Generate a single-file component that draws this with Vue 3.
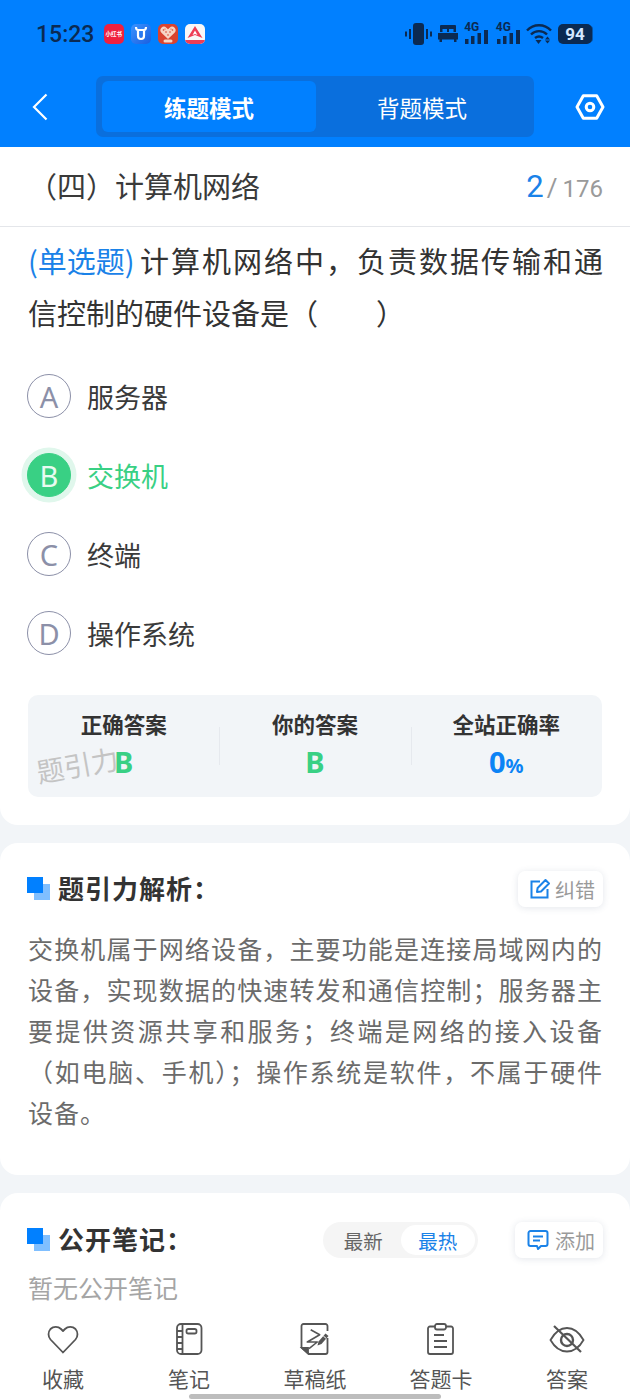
<script setup>
const options = [
  { key: 'A', text: '服务器' },
  { key: 'B', text: '交换机', picked: true },
  { key: 'C', text: '终端' },
  { key: 'D', text: '操作系统' },
]
</script>

<template>
  <div class="page">
    <header class="header">
      <div class="status">
        <span class="time">15:23</span>
        <div class="apps">
          <span class="app red">小红书</span>
          <span class="app blue">
            <svg width="16" height="16" viewBox="0 0 16 16"><path d="M3 1c0 2 1 3 2 3h6c1 0 2-1 2-3M5 4v6a3 3 0 0 0 6 0V4" fill="none" stroke="#fff" stroke-width="2.200"/></svg>
          </span>
          <span class="app heart">
            <svg width="20" height="20" viewBox="0 0 20 20"><path d="M10 15 3.400 8.800a3.400 3.400 0 0 1 0-5 3.500 3.500 0 0 1 5 0L10 5.200l1.600-1.400a3.500 3.500 0 0 1 5 0 3.400 3.400 0 0 1 0 5z" fill="#f6d4c4"/><g fill="#d9432f"><circle cx="5.500" cy="6" r=".8"/><circle cx="8" cy="8" r=".8"/><circle cx="12" cy="8" r=".8"/><circle cx="14.500" cy="6" r=".8"/><circle cx="10" cy="11" r=".8"/><circle cx="7" cy="5" r=".6"/><circle cx="13" cy="5" r=".6"/></g><rect x="5.500" y="15.500" width="9" height="3" rx="1.500" fill="#f6d4c4"/></svg>
          </span>
          <span class="app white">
            <svg width="20" height="20" viewBox="0 0 20 20"><path d="M10 2 17.500 14 10 11 2.500 14z" fill="#ee3d55"/><path d="M10 6.500 7.500 11 10 10l2.500 1z" fill="#fff"/><rect x="0" y="16" width="20" height="4" fill="#ee3d55"/></svg>
          </span>
        </div>
        <div class="spacer"></div>
        <div class="sys">
          <svg width="27" height="22" viewBox="0 0 27 22" fill="#0b2a52"><rect x="8" y="0" width="11" height="22" rx="3"/><rect x="4" y="6" width="2" height="10"/><rect x="0" y="8.500" width="2" height="5"/><rect x="21" y="6" width="2" height="10"/><rect x="25" y="8.500" width="2" height="5"/></svg>
          <svg width="20" height="18" viewBox="0 0 20 18" fill="#0b2a52"><path d="M3 0h14a1 1 0 0 1 1 1v6h-2.500V4H11v3H9V4H4.500v3H2V1a1 1 0 0 1 1-1z"/><path d="M0 8h20v6.500h-1.500V17H16v-2.500H4V17H1.500v-2.500H0z"/></svg>
          <span class="signal">
            <span class="g">4G</span>
            <svg width="26" height="22" viewBox="0 0 26 22" fill="#0b2a52"><rect x="2" y="16" width="3.500" height="5"/><rect x="8" y="13" width="3.500" height="8"/><rect x="14.500" y="10" width="3.500" height="11"/><rect x="21" y="7" width="4" height="14"/></svg>
          </span>
          <span class="signal">
            <span class="g">4G</span>
            <svg width="26" height="22" viewBox="0 0 26 22" fill="#0b2a52"><rect x="2" y="16" width="3.500" height="5"/><rect x="8" y="13" width="3.500" height="8"/><rect x="14.500" y="10" width="3.500" height="11"/><rect x="21" y="7" width="4" height="14"/></svg>
          </span>
          <svg width="26" height="22" viewBox="0 0 26 22" fill="none" stroke="#0b2a52" stroke-width="2.400"><path d="M1 7.500C7.500 .5 18.500 .5 25 7.500"/><path d="M5 11.500c4.500-4.500 11.500-4.500 16 0"/><path d="M9 15c2.500-2 5.500-2 8 0"/><path d="M9.500 17h6L12.500 21z" fill="#0b2a52" stroke="none"/><path d="M19 16.500h5L21.500 13.500zM19 17.500h5L21.500 20.500z" fill="#0b2a52" stroke="none"/></svg>
          <span class="battery"><b>94</b></span>
        </div>
      </div>
      <nav class="nav">
        <svg class="back" width="16" height="28" viewBox="0 0 16 28" fill="none" stroke="#fff" stroke-width="2.200"><path d="M14.500 1.500 2 14l12.500 12.500"/></svg>
        <div class="seg">
          <span class="seg-item on">练题模式</span>
          <span class="seg-item">背题模式</span>
        </div>
        <svg class="gear" width="30" height="26" viewBox="0 0 30 26" fill="none" stroke="#fff" stroke-width="3"><path d="M8.300 1.700h13.400L28 13l-6.300 11.300H8.300L2 13z" stroke-linejoin="round"/><circle cx="15" cy="13" r="3.800"/></svg>
      </nav>
    </header>

    <main class="scroll">
      <section class="card first">
        <div class="title-row">
          <span class="title">（四）计算机网络</span>
          <span class="count"><em>2</em><i>/</i>176</span>
        </div>
        <div class="question">
          <div class="qline"><span class="qtype">(单选题)</span><span class="qtext">计算机网络中，负责数据传输和通</span></div>
          <div>信控制的硬件设备是（&emsp;&emsp;）</div>
        </div>
        <ul class="options">
          <li v-for="o in options" :key="o.key" class="option" :class="{ picked: o.picked }">
            <span class="badge">{{ o.key }}</span>
            <span>{{ o.text }}</span>
          </li>
        </ul>
        <div class="stats">
          <div class="stat">
            <b>正确答案</b>
            <span class="val green">B</span>
            <span class="mark">题引力</span>
          </div>
          <div class="stat">
            <b>你的答案</b>
            <span class="val green">B</span>
          </div>
          <div class="stat">
            <b>全站正确率</b>
            <span class="val blue">0<small>%</small></span>
          </div>
        </div>
      </section>

      <section class="card analysis">
        <div class="head">
          <span class="squares"><s></s><i></i></span>
          <h2>题引力解析：</h2>
          <div class="spacer"></div>
          <span class="chip fix">
            <svg width="22" height="22" viewBox="0 0 22 22" fill="none" stroke="#1a82e8" stroke-width="2"><path d="M11 3.500H2.500v16h16V11"/><path d="M8 14l.6-4L16.500 2l3.500 3.500-8 8z" stroke-linejoin="round"/></svg>
            纠错
          </span>
        </div>
        <p class="body">交换机属于网络设备，主要功能是连接局域网内的设备，实现数据的快速转发和通信控制；服务器主要提供资源共享和服务；终端是网络的接入设备（如电脑、手机）；操作系统是软件，不属于硬件设备。</p>
      </section>

      <section class="card notes">
        <div class="head">
          <span class="squares"><s></s><i></i></span>
          <h2>公开笔记：</h2>
          <div class="spacer"></div>
          <div class="toggle">
            <span>最新</span>
            <span class="on">最热</span>
          </div>
          <span class="chip add">
            <svg width="22" height="22" viewBox="0 0 22 22" fill="none" stroke="#1a82e8" stroke-width="2"><path d="M3.500 2h15A2 2 0 0 1 20.500 4v11a2 2 0 0 1-2 2H14l-3 3-1-3H3.500a2 2 0 0 1-2-2V4a2 2 0 0 1 2-2z" stroke-linejoin="round"/><path d="M6 7.500h10M6 11.500h7"/></svg>
            添加
          </span>
        </div>
        <p class="empty">暂无公开笔记</p>
      </section>
    </main>

    <footer class="tabs">
      <div class="tab">
        <svg width="32" height="32" viewBox="0 0 32 32" fill="none" stroke="#555" stroke-width="1.800"><path d="M16 29.500 3.500 16.500a8 8 0 0 1 0-10.500 7.500 7.500 0 0 1 10.500 0L16 8l2-2a7.500 7.500 0 0 1 10.500 0 8 8 0 0 1 0 10.500z" stroke-linejoin="round"/></svg>
        <span>收藏</span>
      </div>
      <div class="tab">
        <svg width="32" height="32" viewBox="0 0 32 32" fill="none" stroke="#555" stroke-width="1.800"><rect x="4" y="1" width="24.500" height="30" rx="4"/><path d="M9.500 1v30M4 8h5.500M4 14h5.500M4 20h5.500M4 26h5.500"/><rect x="13.500" y="6" width="10" height="4.500" rx="1.800"/></svg>
        <span>笔记</span>
      </div>
      <div class="tab">
        <svg width="32" height="32" viewBox="0 0 32 32" fill="none" stroke="#555" stroke-width="1.800"><path d="M28.500 8V3a2 2 0 0 0-2-2H4.500a2 2 0 0 0-2 2v21.500L10 31h16.500a2 2 0 0 0 2-2V15" stroke-linejoin="round"/><path d="M3 25h6v5.500z" fill="#555"/><path d="M11.700 6.700 20.700 11.700 8.300 19 18.300 19 10 25.700" stroke-linejoin="round" stroke-width="1.600"/><path d="M18.500 22.500 19.500 18.500 26.500 10.500 29.500 13 22.500 21z" fill="#555" stroke="none"/><path d="M24.300 13 27 15.300" stroke="#fff" stroke-width="1"/></svg>
        <span>草稿纸</span>
      </div>
      <div class="tab">
        <svg width="32" height="32" viewBox="0 0 32 32" fill="none" stroke="#555" stroke-width="1.800"><path d="M10 3.500H5a2 2 0 0 0-2 2V29a2 2 0 0 0 2 2h21a2 2 0 0 0 2-2V5.500a2 2 0 0 0-2-2h-5"/><rect x="10" y="1" width="11" height="5.500" rx="2"/><path d="M9 12h10M9 18h13M9 24h13"/></svg>
        <span>答题卡</span>
      </div>
      <div class="tab">
        <svg width="36" height="32" viewBox="0 0 36 32" fill="none" stroke="#555" stroke-width="1.800"><path d="M1.500 17C6 9 11.500 5 18 5s12 4 16.500 12C30 25 24.500 28.500 18 28.500S6 25 1.500 17z"/><circle cx="18" cy="17" r="6" stroke-width="2.400"/><path d="M5 3l27 26" stroke-width="2.200"/></svg>
        <span>答案</span>
      </div>
      <div class="home-bar"></div>
    </footer>
  </div>
</template>

<style scoped>
.page {
  width: 630px;
  height: 1400px;
  display: flex;
  flex-direction: column;
  overflow: hidden;
  background: #f2f5f8;
  position: relative;
  font-family: "Noto Sans CJK SC", "Noto Sans", sans-serif;
  color: #3a3a3a;
}
.header {
  background: #0180ff;
  height: 147px;
  flex: none;
}
.status {
  height: 76px;
  box-sizing: border-box;
  display: flex;
  align-items: center;
  padding: 0 38px 8px 36px;
}
.time {
  font-family: Roboto, sans-serif;
  font-size: 23px;
  font-weight: 500;
  color: #0b2a52;
  line-height: 1;
}
.apps {
  display: flex;
  gap: 7px;
  margin-left: 9.500px;
}
.app {
  width: 20px;
  height: 20px;
  border-radius: 5px;
  display: flex;
  align-items: center;
  justify-content: center;
  overflow: hidden;
  font-size: 5.500px;
  font-weight: 700;
  color: #fff;
  white-space: nowrap;
}
.red { background: #f0203f; }
.blue { background: linear-gradient(135deg, #3b93ff, #1a5fe0); }
.heart { background: #d9432f; }
.white { background: #f8f8f8; }
.spacer { flex: 1; }
.sys {
  display: flex;
  align-items: center;
  gap: 5.600px;
}
.signal {
  position: relative;
  display: block;
  width: 26px;
  height: 22px;
}
.signal svg { display: block; }
.g {
  position: absolute;
  left: 1px;
  top: -1px;
  font: 700 12px/10px Roboto, sans-serif;
  color: #0b2a52;
}
.battery {
  width: 34px;
  height: 20px;
  background: #0b2a52;
  border-radius: 5px;
  display: flex;
  align-items: center;
  justify-content: center;
  box-shadow: 3px 0 0 -2px rgba(11, 42, 82, .5);
}
.battery b {
  font: 700 17px/1 Roboto, sans-serif;
  color: #d4e7ff;
}
.nav {
  height: 61px;
  display: flex;
  align-items: center;
  padding: 0 25px 0 32px;
}
.back { flex: none; }
.seg {
  width: 438px;
  height: 61px;
  margin-left: 48px;
  background: #0a6fdd;
  border-radius: 7px;
  padding: 5px 6px;
  box-sizing: border-box;
  display: flex;
}
.seg-item {
  flex: 1;
  display: flex;
  align-items: center;
  justify-content: center;
  font-size: 22.500px;
  color: #fff;
}
.seg-item:first-child { flex: none; width: 214px; }
.seg-item.on {
  background: #0180ff;
  border-radius: 6px;
  font-weight: 700;
}
.gear { margin-left: auto; }
.scroll {
  flex: 1;
  min-height: 0;
  overflow: hidden;
}
.card {
  background: #fff;
  border-radius: 18px;
  margin-bottom: 18px;
}
.first {
  border-radius: 0 0 18px 18px;
  height: 678px;
  padding: 0 28px;
  box-sizing: border-box;
}
.title-row {
  height: 80px;
  margin: 0 -28px;
  padding: 0 27px 4px 28px;
  border-bottom: 1px solid #e4e6ea;
  display: flex;
  align-items: center;
  justify-content: space-between;
  box-sizing: border-box;
}
.title {
  font-size: 29px;
  color: #3a3a3a;
}
.count {
  font: 400 24px/1 Roboto, sans-serif;
  color: #9a9a9a;
  padding-top: 4px;
}
.count em {
  font-style: normal;
  font-size: 31px;
  color: #1a82e8;
}
.count i {
  font-style: normal;
  font-size: 26px;
  margin: 0 5px 0 3px;
}
.question {
  margin: 7px 0 0;
  width: 575px;
  font-size: 29px;
  line-height: 52px;
  color: #333;
}
.qline {
  display: flex;
  justify-content: space-between;
}
.qtype {
  flex: none;
  width: 106px;
  color: #1a82e8;
  white-space: nowrap;
}
.qtext {
  width: 463px;
  text-align: justify;
  text-align-last: justify;
  text-justify: inter-character;
  white-space: nowrap;
}
.options {
  list-style: none;
  margin: 36px 0 0;
  padding: 0;
}
.option {
  height: 44px;
  margin-bottom: 35px;
  display: flex;
  align-items: center;
  gap: 16px;
  font-size: 27px;
  color: #3a3a3a;
}
.badge {
  width: 44px;
  height: 44px;
  margin-left: -1px;
  flex: none;
  box-sizing: border-box;
  border: 1.500px solid #8c90a8;
  border-radius: 50%;
  display: flex;
  align-items: center;
  justify-content: center;
  font-family: "Noto Sans", sans-serif;
  font-size: 29px;
  color: #8c90a8;
}
.picked { color: #39d084; }
.picked .badge {
  background: #39d084;
  border-color: #39d084;
  color: #e8fbf1;
  box-shadow: 0 0 0 5.500px #e0f7ec;
}
.stats {
  margin-top: 40px;
  height: 102px;
  background: #f2f5f8;
  border-radius: 10px;
  display: flex;
  box-sizing: border-box;
}
.stat {
  flex: 1;
  position: relative;
  display: flex;
  flex-direction: column;
  align-items: center;
  padding-top: 12px;
}
.stat + .stat::before {
  content: "";
  position: absolute;
  left: 0;
  top: 32px;
  bottom: 32px;
  width: 1px;
  background: #e6e9ee;
}
.stat b {
  font-size: 21.500px;
  line-height: 34px;
  color: #333;
}
.val {
  font-family: "Noto Sans", sans-serif;
  font-weight: 700;
  font-size: 29px;
  line-height: 34px;
  margin-top: 4px;
}
.val small { font-size: 20px; }
.green { color: #39d084; }
.blue.val { color: #0c83f5; background: none; }
.mark {
  position: absolute;
  left: 8px;
  top: 49px;
  font-size: 27.500px;
  line-height: 40px;
  color: #c4c4c4;
  transform: rotate(-10deg);
  white-space: nowrap;
}
.analysis {
  height: 332px;
  padding: 27px 28px 0;
  box-sizing: border-box;
}
.head {
  display: flex;
  align-items: center;
  height: 38px;
}
.squares {
  position: relative;
  width: 23px;
  height: 23px;
  flex: none;
  margin: -2px 8px 0 -1px;
}
.squares i, .squares s {
  position: absolute;
  width: 16px;
  height: 16px;
}
.squares s { right: 0; bottom: 0; background: #80bfff; }
.squares i { left: 0; top: 0; background: #0180ff; }
h2 {
  margin: -4px 0 0;
  font-size: 26px;
  font-weight: 700;
  color: #333;
  letter-spacing: 1px;
}
.chip {
  height: 36px;
  display: flex;
  align-items: center;
  padding: 0 8px 0 11px;
  gap: 4px;
  font-size: 20px;
  color: #9a9a9a;
  background: #fff;
  border-radius: 7px;
  box-shadow: 0 1px 7px rgba(60, 80, 110, .14);
  margin-right: -1px;
}
.chip.add {
  padding-left: 12px;
  gap: 6px;
}
.body {
  margin: 20px 0 0;
  font-size: 25px;
  line-height: 41px;
  color: #6b6b6b;
  letter-spacing: 1px;
  width: 575px;
  text-align: justify;
  text-justify: inter-character;
}
.notes {
  padding: 28px 28px 0;
  height: 200px;
  box-sizing: border-box;
  margin-bottom: 0;
}
.toggle {
  display: flex;
  align-items: center;
  height: 36px;
  padding: 3px;
  box-sizing: border-box;
  background: #f5f5f5;
  border-radius: 18px;
  font-size: 19.500px;
  color: #666;
  margin-right: 37px;
  width: 155px;
}
.toggle span {
  flex: 1;
  height: 30px;
  display: flex;
  align-items: center;
  justify-content: center;
  border-radius: 15px;
}
.toggle .on { background: #fff; color: #1a82e8; }
.empty {
  margin: 10px 0 0;
  font-size: 25px;
  line-height: 36px;
  color: #a5a5a5;
}
.tabs {
  position: absolute;
  left: 0;
  right: 0;
  bottom: 0;
  height: 95px;
  background: #fff;
  display: flex;
}
.tab {
  width: 126px;
  display: flex;
  flex-direction: column;
  align-items: center;
  padding-top: 18px;
  box-sizing: border-box;
  font-size: 21px;
  color: #555;
}
.tab span { line-height: 30px; margin-top: 8px; }
.home-bar {
  position: absolute;
  left: 189px;
  bottom: 1px;
  width: 252px;
  height: 5px;
  border-radius: 3px;
  background: #bdbdbd;
}
</style>
